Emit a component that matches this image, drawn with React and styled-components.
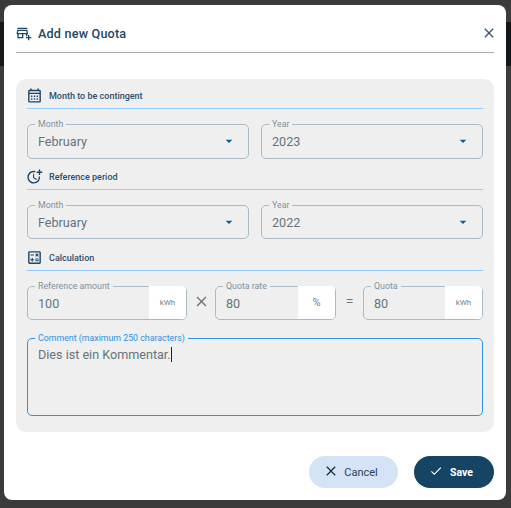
import React from 'react';
import styled, { createGlobalStyle } from 'styled-components';
import {
  MdOutlineAddBusiness,
  MdOutlineCalendarMonth,
  MdOutlineMoreTime,
  MdOutlineCalculate,
  MdClose,
  MdCheck,
  MdArrowDropDown,
} from 'react-icons/md';

const GlobalStyle = createGlobalStyle`
  html, body {
    margin: 0;
    padding: 0;
    background: #3b3b3b;
    font-family: Roboto, "Liberation Sans", sans-serif;
  }
  * { box-sizing: border-box; }
`;

const Page = styled.div`
  position: relative;
  width: 511px;
  height: 508px;
  overflow: hidden;
  background: #3b3b3b;
`;

const BehindHeader = styled.div`
  height: 44px;
  margin-top: 22px;
  background: #15181b;
`;

const Dialog = styled.div`
  position: absolute;
  left: 4px;
  top: 5px;
  width: 502px;
  height: 495px;
  background: #fff;
  border-radius: 8px;
  padding: 0 12px;
`;

const TitleBar = styled.div`
  height: 48px;
  display: flex;
  align-items: center;
  border-bottom: 1px solid #a6adb6;
  color: #1d4668;
  padding-top: 9px;
`;

const TitleIcon = styled(MdOutlineAddBusiness)`
  font-size: 16px;
  flex: none;
`;

const CloseIcon = styled(MdClose)`
  font-size: 16px;
  flex: none;
  margin-right: -3px;
  color: #3b5570;
`;

const Title = styled.h2`
  flex: 1;
  margin: 0 0 0 6px;
  font-size: 12.6px;
  font-weight: 500;
  letter-spacing: 0.2px;
`;

const Panel = styled.div`
  margin-top: 26px;
  height: 353px;
  background: #efefef;
  border-radius: 10px;
  padding: 7px 11px 0;
`;

const Section = styled.div`
  height: 23px;
  margin-top: ${(p) => p.$top || 0}px;
  display: flex;
  align-items: center;
  gap: 6px;
  padding-bottom: 3px;
  border-bottom: 1px solid ${(p) => p.$line};
  color: #2a5070;
  font-size: 9px;
  font-weight: 500;
  svg { font-size: 17px; flex: none; margin-left: -1px; color: #1d4668; }
`;

const Row = styled.div`
  display: flex;
  align-items: center;
  gap: ${(p) => p.$gap ?? 12}px;
  margin-top: ${(p) => p.$top}px;
`;

const Field = styled.fieldset`
  position: relative;
  margin: 0;
  padding: 0 0 ${(p) => (p.$multi ? 0 : 2)}px 10px;
  min-width: 0;
  width: ${(p) => p.$width}px;
  height: ${(p) => p.$height}px;
  flex: none;
  display: flex;
  align-items: ${(p) => (p.$multi ? 'flex-start' : 'center')};
  border: 1px solid ${(p) => (p.$focus ? '#2d92e8' : '#a9bac5')};
  border-radius: 5px;
  color: #66737d;
`;

const Legend = styled.legend`
  margin-left: -3px;
  padding: 0 3px;
  font-size: 8.8px;
  line-height: 8px;
  height: 8px;
  color: ${(p) => (p.$focus ? '#2d92e8' : '#7f929e')};
`;

const Value = styled.span`
  flex: 1;
  font-size: 12.6px;
  line-height: 16px;
  margin-top: ${(p) => p.$top || 0}px;
  color: #66737d;
`;

const Caret = styled.span`
  display: inline-block;
  width: 1px;
  height: 15px;
  vertical-align: -3px;
  background: #1b2530;
`;

const Arrow = styled(MdArrowDropDown)`
  flex: none;
  font-size: 16px;
  color: #0b5c94;
  margin: -2px 11px 0 0;
`;

const Unit = styled.span`
  flex: none;
  width: ${(p) => p.$width || 37}px;
  align-self: stretch;
  margin: -4px 0 -2px;
  display: flex;
  align-items: center;
  justify-content: center;
  background: #fff;
  border-radius: 0 4px 4px 0;
  color: #71808b;
  font-size: ${(p) => p.$size || 8}px;
`;

const Operator = styled.span`
  flex: none;
  width: ${(p) => p.$width}px;
  display: flex;
  justify-content: center;
  color: #6b7780;
  font-size: 14px;
  font-weight: 300;
  svg { font-size: 17px; }
`;

const Footer = styled.div`
  display: flex;
  justify-content: flex-end;
  gap: 16px;
  margin-top: 24px;
`;

const Button = styled.button`
  height: 32px;
  width: ${(p) => p.$width}px;
  border: none;
  border-radius: 16px;
  padding: 0 ${(p) => (p.$primary ? 6 : 5)}px 0 0;
  display: flex;
  align-items: center;
  justify-content: center;
  gap: ${(p) => (p.$primary ? 7 : 6)}px;
  font-family: inherit;
  font-size: ${(p) => (p.$primary ? 10.5 : 11)}px;
  font-weight: ${(p) => (p.$primary ? 700 : 400)};
  background: ${(p) => (p.$primary ? '#164464' : '#d5e3f6')};
  color: ${(p) => (p.$primary ? '#fff' : '#2b3f57')};
  svg {
    font-size: ${(p) => (p.$primary ? 14 : 16)}px;
    margin: -2px ${(p) => (p.$primary ? 0 : -1)}px 0;
    color: ${(p) => (p.$primary ? '#fff' : '#1f3047')};
  }
`;

const SelectField = ({ label, value, height = 39 }) => (
  <Field $width={222} $height={height}>
    <Legend>{label}</Legend>
    <Value>{value}</Value>
    <Arrow />
  </Field>
);

const UnitField = ({ label, value, unit, width, unitSize }) => (
  <Field $width={width} $height={38}>
    <Legend>{label}</Legend>
    <Value>{value}</Value>
    <Unit $size={unitSize}>{unit}</Unit>
  </Field>
);

export default function App() {
  return (
    <Page>
      <GlobalStyle />
      <BehindHeader />
      <Dialog>
        <TitleBar>
          <TitleIcon />
          <Title>Add new Quota</Title>
          <CloseIcon />
        </TitleBar>
        <Panel>
          <Section $line="#92c9fb">
            <MdOutlineCalendarMonth />
            Month to be contingent
          </Section>
          <Row $top={11}>
            <SelectField label="Month" value="February" />
            <SelectField label="Year" value="2023" />
          </Row>
          <Section $top={8} $line="#a9c9e8">
            <MdOutlineMoreTime />
            Reference period
          </Section>
          <Row $top={11}>
            <SelectField label="Month" value="February" height={38} />
            <SelectField label="Year" value="2022" height={38} />
          </Row>
          <Section $top={9} $line="#92c9fb">
            <MdOutlineCalculate />
            Calculation
          </Section>
          <Row $top={11} $gap={0}>
            <UnitField label="Reference amount" value="100" unit="kWh" width={160} />
            <Operator $width={28}><MdClose /></Operator>
            <UnitField label="Quota rate" value="80" unit="%" width={121} unitSize={11} />
            <Operator $width={27}>=</Operator>
            <UnitField label="Quota" value="80" unit="kWh" width={120} />
          </Row>
          <Row $top={14}>
            <Field $width={456} $height={82} $multi $focus>
              <Legend $focus>Comment (maximum 250 characters)</Legend>
              <Value $top={5}>Dies ist ein Kommentar.<Caret /></Value>
            </Field>
          </Row>
        </Panel>
        <Footer>
          <Button $width={89}><MdClose />Cancel</Button>
          <Button $width={80} $primary><MdCheck />Save</Button>
        </Footer>
      </Dialog>
    </Page>
  );
}
